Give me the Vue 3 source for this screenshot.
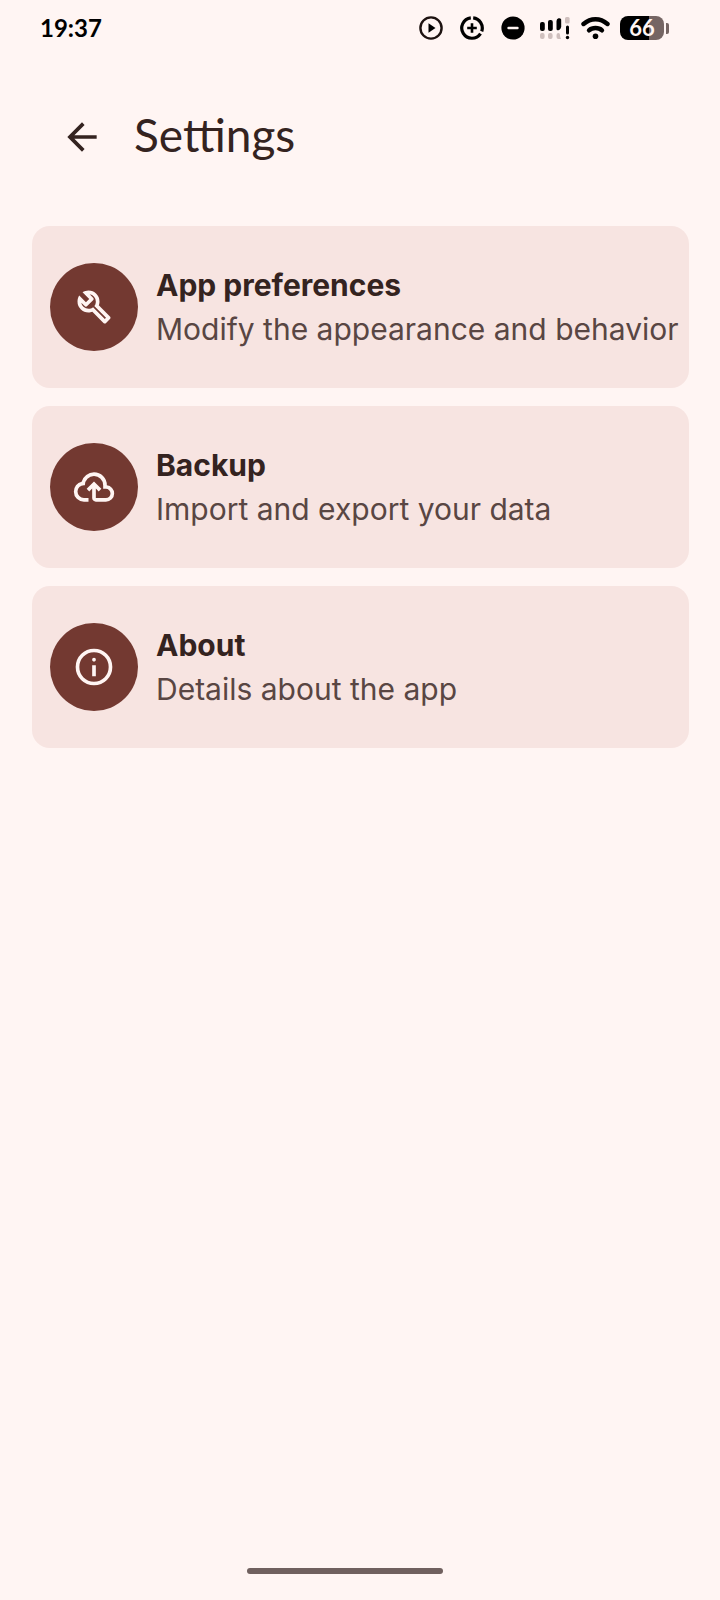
<script setup>
const items = [
  {
    id: 'preferences',
    title: 'App preferences',
    detail: 'Modify the appearance and behavior',
    icon: 'M686-132 444-376q-20 8-40.5 12t-43.5 4q-100 0-170-70t-70-170q0-36 10-68.5t28-61.5l146 146 72-72-146-146q29-18 61.5-28t68.5-10q100 0 170 70t70 170q0 23-4 43.5T584-516l244 242q12 12 12 29t-12 29l-84 84q-12 12-29 12t-29-12Zm29-85 27-27-256-256q18-20 26-46.5t8-53.5q0-60-38.5-104.5T386-758l74 74q12 12 12 28t-12 28L332-500q-12 12-28 12t-28-12l-74-74q9 57 53.5 95.5T360-440q26 0 53-8t47-25l255 256Z',
  },
  {
    id: 'backup',
    title: 'Backup',
    detail: 'Import and export your data',
    icon: 'M260-160q-91 0-155.5-63T40-377q0-78 47-139t123-78q25-92 100-149t170-57q117 0 198.5 81.5T760-520q69 8 114.5 59.5T920-340q0 75-52.5 127.5T740-160H520q-33 0-56.5-23.5T440-240v-206l-64 62-56-56 160-160 160 160-56 56-64-62v206h220q42 0 71-29t29-71q0-42-29-71t-71-29h-60v-80q0-83-58.5-141.5T480-720q-83 0-141.5 58.5T280-520h-20q-58 0-99 41t-41 99q0 58 41 99t99 41h100v80H260Z',
  },
  {
    id: 'about',
    title: 'About',
    detail: 'Details about the app',
    icon: 'M440-280h80v-240h-80v240Zm40-320q17 0 28.500-11.500T520-640q0-17-11.500-28.500T480-680q-17 0-28.500 11.500T440-640q0 17 11.500 28.500T480-600Zm0 520q-166 0-283-117T80-480q0-166 117-283t283-117q166 0 283 117t117 283q0 166-117 283T480-80Zm0-80q134 0 227-93t93-227q0-134-93-227t-227-93q-134 0-227 93t-93 227q0 134 93 227t227 93Z',
  },
]
</script>

<template>
  <div class="screen">
    <div class="status">
      <time class="clock">19:37</time>
      <div class="indicators">
        <svg class="round" viewBox="0 0 24 24" aria-hidden="true">
          <circle cx="12" cy="12" r="10.600" fill="none" stroke="#1d1210" stroke-width="2.400" />
          <path d="M9.500 7.300 16.500 12l-7 4.700z" fill="#000" />
        </svg>
        <svg class="round" viewBox="0 0 24 24" aria-hidden="true">
          <path d="M10.800 1.900A10.200 10.200 0 1 0 20.500 17.600" fill="none" stroke="#000" stroke-width="3.200" />
          <path d="M13.200 1.900A10.200 10.200 0 0 1 21.700 15.400" fill="none" stroke="#000" stroke-width="3.200" />
          <path d="M12 7.200v9.600M7.200 12h9.600" stroke="#000" stroke-width="2.600" />
        </svg>
        <svg class="round" viewBox="0 0 24 24" aria-hidden="true">
          <circle cx="12" cy="12" r="11.600" fill="#000" />
          <path d="M7.500 12h9" stroke="#fff5f3" stroke-width="2.400" stroke-linecap="round" />
        </svg>
        <svg class="signal" viewBox="0 0 30 24" aria-hidden="true">
          <g fill="#000">
            <rect x="0" y="6" width="4.800" height="9" rx="2" />
            <rect x="8" y="4" width="4.800" height="11" rx="2" />
            <path d="M16.500 5q0-2 2-2.700 2.700-.5 2.700 1.500v7q0 1.700-1.700 2.900-3 1.700-3-1z" />
            <rect x="26" y="9.500" width="3" height="9" rx="1.500" />
            <circle cx="27.500" cy="21.500" r="1.700" />
          </g>
          <g fill="#cfbfbd">
            <rect x="0" y="17" width="4.600" height="6" rx="2" />
            <rect x="8" y="17" width="4.600" height="6" rx="2" />
            <path d="M16.500 19q0-2 2-2 1.500 0 1.500 2 0 2 1 4h-2.500q-2 0-2-2z" />
            <rect x="25" y="1" width="4.600" height="6.500" rx="1.500" />
          </g>
        </svg>
        <svg class="wifi" viewBox="0 0 30 24" aria-hidden="true">
          <g fill="none" stroke="#000" stroke-width="4.400" stroke-linecap="round">
            <path d="M2.500 8Q8 3.200 14.500 3.200t12 4.800" />
            <path d="M8 14.300Q10.500 12 14.500 12t6.500 2.300" />
          </g>
          <circle cx="14.500" cy="20.300" r="2.800" />
        </svg>
        <div class="battery"><span class="level">66</span></div>
      </div>
    </div>

    <header class="bar">
      <button class="back" type="button" aria-label="Back">
        <svg viewBox="0 0 24 24" aria-hidden="true">
          <path d="M20 11H7.830l5.590-5.590L12 4l-8 8 8 8 1.410-1.410L7.830 13H20v-2z" />
        </svg>
      </button>
      <h1>Settings</h1>
    </header>

    <main class="list">
      <a v-for="item in items" :key="item.id" class="card" :href="'#' + item.id">
        <span class="badge">
          <svg viewBox="0 -960 960 960" aria-hidden="true"><path :d="item.icon" /></svg>
        </span>
        <span class="text">
          <span class="title">{{ item.title }}</span>
          <span class="detail">{{ item.detail }}</span>
        </span>
      </a>
    </main>

    <div class="handle"></div>
  </div>
</template>

<style>
body {
  background: #fff5f3;
}
</style>

<style scoped>
.screen {
  box-sizing: border-box;
  min-height: 100vh;
  display: flex;
  flex-direction: column;
  background: #fff5f3;
  color: #342320;
  font-family: Lato, "Open Sans", sans-serif;
}
.status {
  height: 56px;
  padding: 0 51px 0 40px;
  display: flex;
  align-items: center;
  justify-content: space-between;
  color: #000;
}
.clock {
  font-size: 24px;
  line-height: 32px;
  font-weight: 700;
}
.indicators {
  display: flex;
  align-items: center;
}
.indicators svg {
  height: 24px;
  flex: none;
}
.round {
  width: 24px;
  margin-right: 17px;
}
.signal {
  width: 30px;
  margin-right: 11px;
}
.round + .signal {
  margin-left: -2px;
}
.wifi {
  width: 30px;
  margin-right: 9px;
}
.battery {
  display: flex;
  align-items: center;
}
.battery::after {
  content: "";
  width: 3px;
  height: 11px;
  margin-left: 2px;
  border-radius: 0 2px 2px 0;
  background: #756563;
}
.level {
  width: 44px;
  height: 24px;
  border-radius: 8px;
  background: linear-gradient(90deg, #000 66%, #756563 66%);
  color: #fff5f3;
  font-size: 22px;
  line-height: 24px;
  font-weight: 700;
  text-align: center;
}
.bar {
  padding: 53px 60px 61px;
  display: flex;
  align-items: center;
  gap: 30px;
}
.back {
  padding: 0;
  border: 0;
  background: none;
  color: inherit;
  width: 44px;
  height: 44px;
}
.back svg {
  display: block;
  width: 44px;
  height: 44px;
  fill: currentColor;
}
h1 {
  margin: 0;
  font-size: 46px;
  line-height: 52px;
  padding-bottom: 4px;
  font-weight: 400;
}
.list {
  flex: 1;
  padding: 0 31px 0 32px;
  display: flex;
  flex-direction: column;
  gap: 18px;
}
.card {
  padding: 37px 10px 37px 18px;
  display: flex;
  align-items: center;
  gap: 18px;
  border-radius: 18px;
  background: #f7e4e1;
  color: inherit;
  text-decoration: none;
}
.badge {
  flex: none;
  width: 88px;
  height: 88px;
  display: flex;
  align-items: center;
  justify-content: center;
  border-radius: 50%;
  background: #733931;
}
.badge svg {
  width: 44px;
  height: 44px;
  fill: #fff5f3;
}
.text {
  min-width: 0;
  display: flex;
  flex-direction: column;
  font-family: Inter, "Open Sans", sans-serif;
  font-size: 30px;
  line-height: 44px;
}
.title {
  font-weight: 700;
}
.detail {
  color: #594643;
}
.handle {
  width: 196px;
  height: 6px;
  margin: 0 auto 26px;
  border-radius: 3px;
  background: #70605e;
  position: relative;
  right: 15px;
}
</style>
